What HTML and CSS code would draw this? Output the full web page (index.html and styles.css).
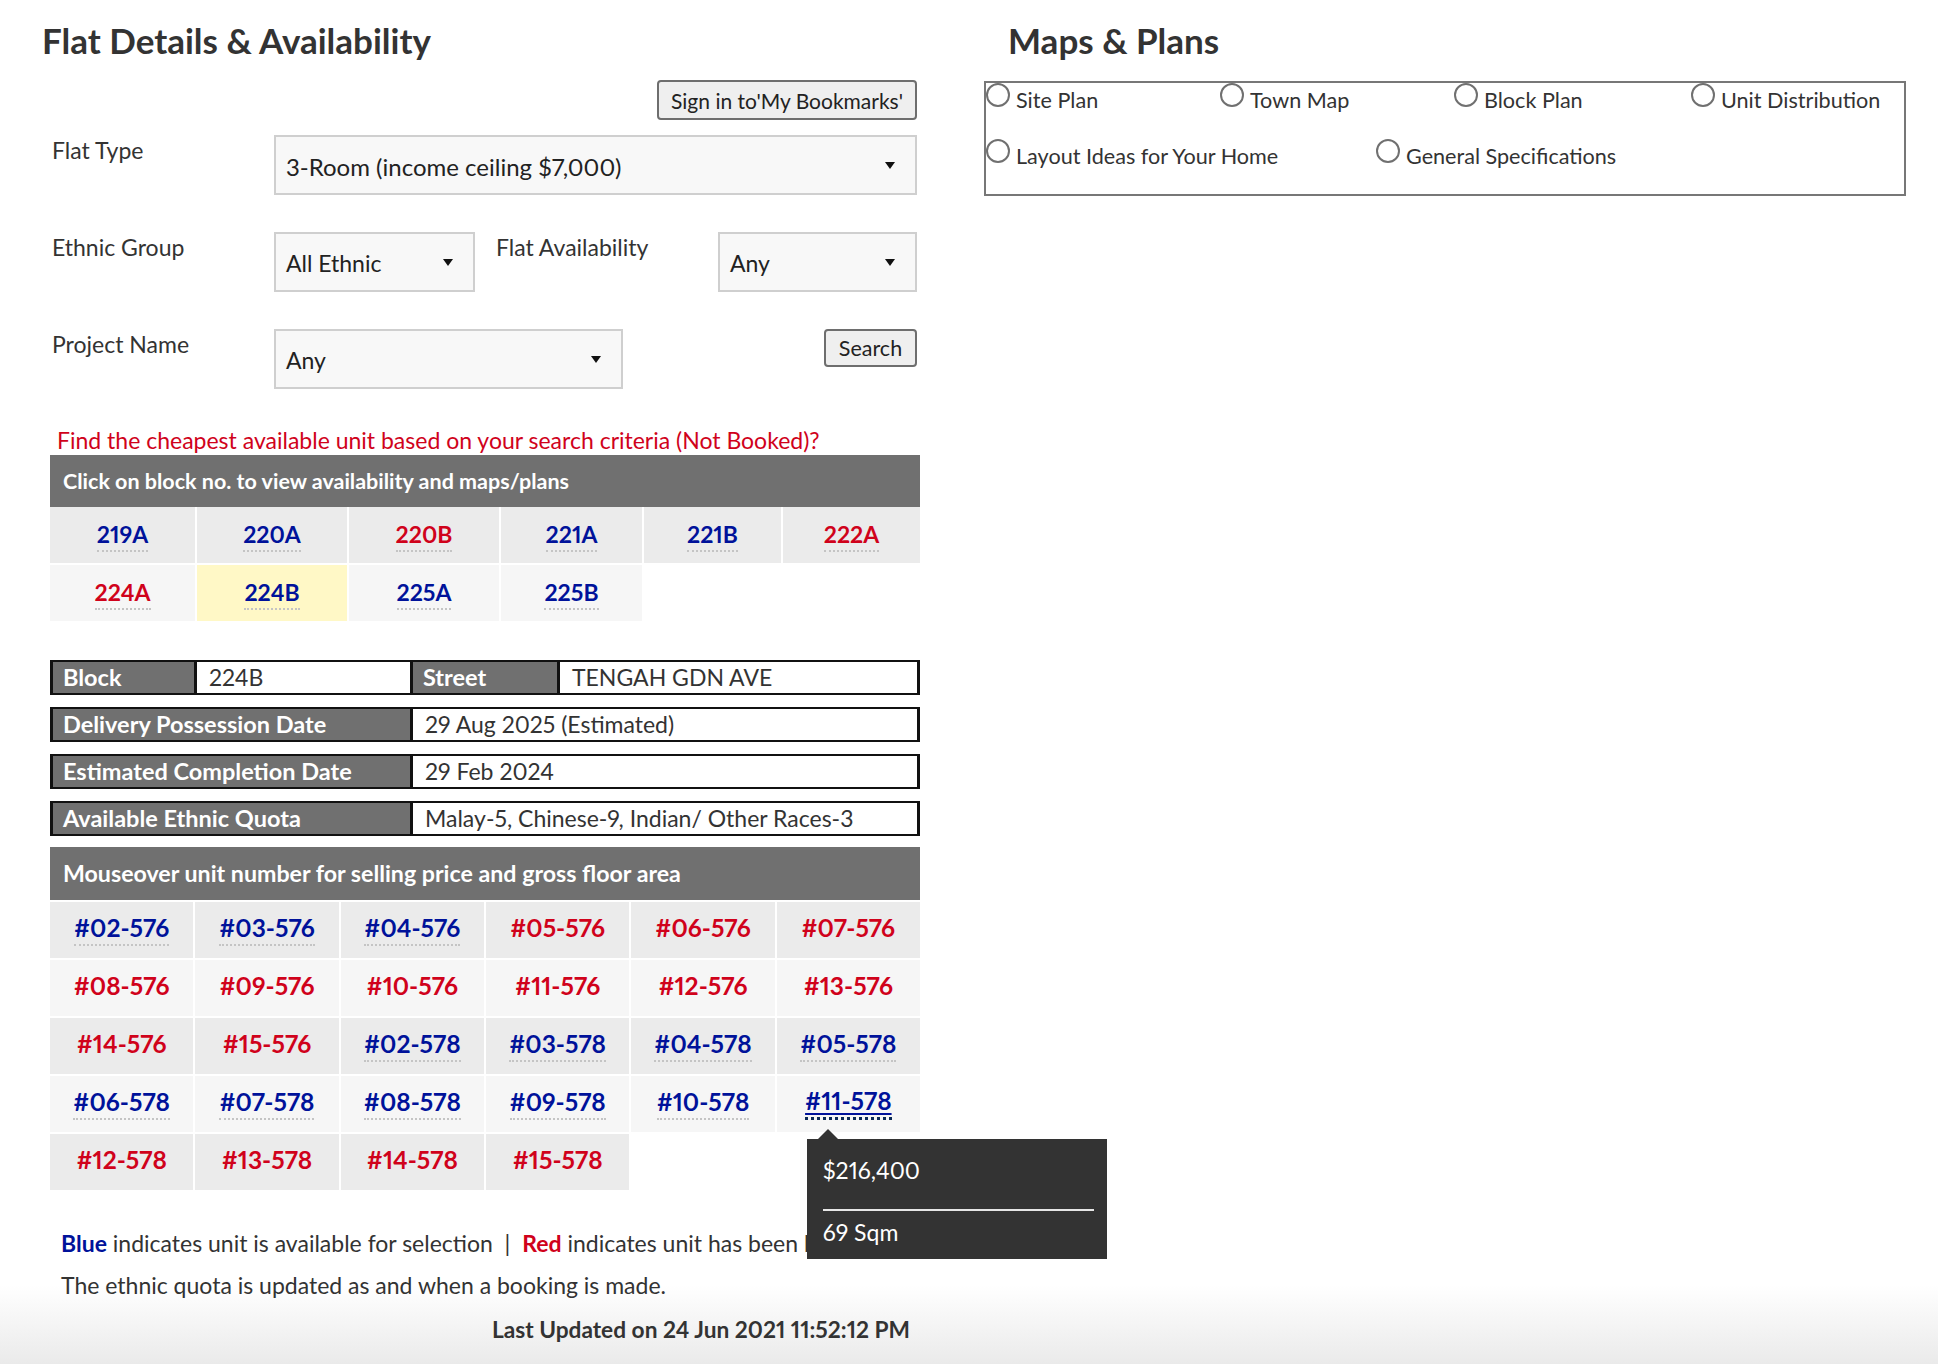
FILE: index.html
```html
<!DOCTYPE html>
<html lang="en">
<head>
<meta charset="utf-8">
<title>Flat Details &amp; Availability</title>
<link rel="stylesheet" href="styles.css">
</head>
<body>
<div class="page">
  <section class="col-left">
    <h2 class="title title-left">Flat Details &amp; Availability</h2>
    <div class="bookmark-row"><button class="btn btn-bookmark">Sign in to'My Bookmarks'</button></div>

    <div class="form">
      <div class="form-row">
        <label class="f-label">Flat Type</label>
        <div class="select sel-flat"><span>3-Room (income ceiling $7,000)</span><i class="caret"></i></div>
      </div>
      <div class="form-row">
        <label class="f-label">Ethnic Group</label>
        <div class="select sel-ethnic"><span>All Ethnic</span><i class="caret"></i></div>
        <label class="f-label f-label-2">Flat Availability</label>
        <div class="select sel-avail"><span>Any</span><i class="caret"></i></div>
      </div>
      <div class="form-row">
        <label class="f-label">Project Name</label>
        <div class="select sel-project"><span>Any</span><i class="caret"></i></div>
        <button class="btn btn-search">Search</button>
      </div>
    </div>

    <p class="cheapest">Find the cheapest available unit based on your search criteria (Not Booked)?</p>
    <div class="bar bar-blocks">Click on block no. to view availability and maps/plans</div>
    <div class="blocks">
      <div class="bcell r-dark"><a class="lnk blue">219A</a></div>
      <div class="bcell r-dark"><a class="lnk blue">220A</a></div>
      <div class="bcell r-dark"><a class="lnk red">220B</a></div>
      <div class="bcell r-dark"><a class="lnk blue">221A</a></div>
      <div class="bcell r-dark"><a class="lnk blue">221B</a></div>
      <div class="bcell r-dark"><a class="lnk red">222A</a></div>
      <div class="bcell r-light"><a class="lnk red">224A</a></div>
      <div class="bcell r-sel"><a class="lnk blue">224B</a></div>
      <div class="bcell r-light"><a class="lnk blue">225A</a></div>
      <div class="bcell r-light"><a class="lnk blue">225B</a></div>
    </div>

    <div class="info">
      <div class="info-row">
        <div class="ic ic-label ic-w1">Block</div>
        <div class="ic ic-val ic-w2">224B</div>
        <div class="ic ic-label ic-w3">Street</div>
        <div class="ic ic-val ic-grow">TENGAH GDN AVE</div>
      </div>
      <div class="info-row">
        <div class="ic ic-label ic-wl">Delivery Possession Date</div>
        <div class="ic ic-val ic-grow">29 Aug 2025 (Estimated)</div>
      </div>
      <div class="info-row">
        <div class="ic ic-label ic-wl">Estimated Completion Date</div>
        <div class="ic ic-val ic-grow">29 Feb 2024</div>
      </div>
      <div class="info-row">
        <div class="ic ic-label ic-wl">Available Ethnic Quota</div>
        <div class="ic ic-val ic-grow">Malay-5, Chinese-9, Indian/ Other Races-3</div>
      </div>
    </div>

    <div class="bar bar-units">Mouseover unit number for selling price and gross floor area</div>
    <div class="units">
      <div class="ucell r-dark"><a class="lnk blue">#02-576</a></div>
      <div class="ucell r-dark"><a class="lnk blue">#03-576</a></div>
      <div class="ucell r-dark"><a class="lnk blue">#04-576</a></div>
      <div class="ucell r-dark"><a class="lnk red nodot">#05-576</a></div>
      <div class="ucell r-dark"><a class="lnk red nodot">#06-576</a></div>
      <div class="ucell r-dark"><a class="lnk red nodot">#07-576</a></div>

      <div class="ucell r-light"><a class="lnk red nodot">#08-576</a></div>
      <div class="ucell r-light"><a class="lnk red nodot">#09-576</a></div>
      <div class="ucell r-light"><a class="lnk red nodot">#10-576</a></div>
      <div class="ucell r-light"><a class="lnk red nodot">#11-576</a></div>
      <div class="ucell r-light"><a class="lnk red nodot">#12-576</a></div>
      <div class="ucell r-light"><a class="lnk red nodot">#13-576</a></div>

      <div class="ucell r-dark"><a class="lnk red nodot">#14-576</a></div>
      <div class="ucell r-dark"><a class="lnk red nodot">#15-576</a></div>
      <div class="ucell r-dark"><a class="lnk blue">#02-578</a></div>
      <div class="ucell r-dark"><a class="lnk blue">#03-578</a></div>
      <div class="ucell r-dark"><a class="lnk blue">#04-578</a></div>
      <div class="ucell r-dark"><a class="lnk blue">#05-578</a></div>

      <div class="ucell r-light"><a class="lnk blue">#06-578</a></div>
      <div class="ucell r-light"><a class="lnk blue">#07-578</a></div>
      <div class="ucell r-light"><a class="lnk blue">#08-578</a></div>
      <div class="ucell r-light"><a class="lnk blue">#09-578</a></div>
      <div class="ucell r-light"><a class="lnk blue">#10-578</a></div>
      <div class="ucell r-light ucell-hover"><a class="lnk blue hovered">#11-578</a>
        <div class="tooltip">
          <div class="tt-line">$216,400</div>
          <hr class="tt-rule">
          <div class="tt-line">69 Sqm</div>
        </div>
      </div>

      <div class="ucell r-dark"><a class="lnk red nodot">#12-578</a></div>
      <div class="ucell r-dark"><a class="lnk red nodot">#13-578</a></div>
      <div class="ucell r-dark"><a class="lnk red nodot">#14-578</a></div>
      <div class="ucell r-dark"><a class="lnk red nodot">#15-578</a></div>
    </div>

    <p class="legend"><b class="blue">Blue</b> indicates unit is available for selection &nbsp;|&nbsp; <b class="red">Red</b> indicates unit has been booked.</p>
    <p class="note">The ethnic quota is updated as and when a booking is made.</p>
    <p class="updated">Last Updated on 24 Jun 2021 11:52:12 PM</p>
  </section>

  <section class="col-right">
    <h2 class="title title-right">Maps &amp; Plans</h2>
    <div class="plans">
      <div class="plan-row">
        <label class="opt opt-w1"><input type="radio" name="plan"><span>Site Plan</span></label>
        <label class="opt opt-w1"><input type="radio" name="plan"><span>Town Map</span></label>
        <label class="opt opt-w2"><input type="radio" name="plan"><span>Block Plan</span></label>
        <label class="opt"><input type="radio" name="plan"><span>Unit Distribution</span></label>
      </div>
      <div class="plan-row">
        <label class="opt opt-w3"><input type="radio" name="plan"><span>Layout Ideas for Your Home</span></label>
        <label class="opt"><input type="radio" name="plan"><span>General Specifications</span></label>
      </div>
    </div>
  </section>
</div>
</body>
</html>
```

FILE: styles.css
```css
html {
  background: #fff;
}
body {
  margin: 0;
  height: 1364px;
  overflow: hidden;
  font-family: Lato, "Open Sans", "Noto Sans", sans-serif;
  font-size: 23px;
  font-variant-numeric: proportional-nums;
  color: #333;
  background: linear-gradient(to bottom, #fff 0, #fff 1285px, #eaeaea 1364px);
}
.page {
  display: flex;
  align-items: flex-start;
  padding-top: 18px;
}
.col-left {
  margin-left: 50px;
  width: 870px;
}
.col-right {
  margin-left: 64px;
  width: 922px;
}
.title {
  margin: 0;
  font-size: 35px;
  line-height: 44px;
  font-weight: 700;
  color: #333;
}
.title-left {
  margin-left: -8px;
}
.title-right {
  padding-left: 24px;
}

/* buttons */
.btn {
  font-family: inherit;
  font-size: 21px;
  font-variant-numeric: proportional-nums;
  color: #222;
  background: #efefef;
  border: 2px solid #6e6e6e;
  border-radius: 4px;
  padding: 0 12px;
  cursor: pointer;
}
.bookmark-row {
  width: 867px;
  display: flex;
  justify-content: flex-end;
  margin-top: 18px;
}
.btn-bookmark {
  height: 40px;
}

/* form */
.form {
  width: 867px;
  margin-top: 15px;
}
.form-row {
  display: flex;
  align-items: flex-start;
  margin-bottom: 37px;
}
.form-row:last-child {
  margin-bottom: 0;
}
.f-label {
  width: 222px;
  padding-left: 2px;
  line-height: 30px;
  color: #333;
}
.f-label-2 {
  padding-left: 21px;
  width: 222px;
}
.select {
  box-sizing: border-box;
  height: 60px;
  background: #f8f8f8;
  border: 2px solid #cfcfcf;
  display: flex;
  align-items: center;
  padding: 0 0 0 10px;
  color: #222;
  position: relative;
}
.select span {
  flex: 1;
  padding-top: 2px;
}
.sel-flat span {
  font-size: 24px;
}
.caret {
  width: 0;
  height: 0;
  border-left: 5px solid transparent;
  border-right: 5px solid transparent;
  border-top: 7px solid #111;
  margin-right: 20px;
}
.sel-flat { width: 643px; }
.sel-ethnic { width: 201px; }
.sel-avail { width: 199px; }
.sel-project { width: 349px; }
.btn-search {
  margin-left: auto;
  height: 38px;
  width: 93px;
  padding: 0;
  font-size: 21.5px;
}

/* red link line */
.cheapest {
  margin: 36px 0 0 7px;
  line-height: 30px;
  color: #d0021b;
}

/* grey bars */
.bar {
  height: 52px;
  line-height: 52px;
  background: #707070;
  color: #fff;
  font-weight: 700;
  padding-left: 13px;
}
.bar-blocks {
  font-size: 21.5px;
}

/* blocks */
.blocks {
  display: grid;
  grid-template-columns: 145px 150px 150px 141px 137px 137px;
  grid-auto-rows: 56px;
  gap: 2px;
}
.bcell, .ucell {
  display: flex;
  align-items: center;
  justify-content: center;
}
.r-dark { background: #ebebeb; }
.r-light { background: #f6f6f6; }
.r-sel { background: #fff8c6; }

.lnk {
  font-weight: 700;
  font-size: 23px;
  line-height: 26px;
  padding-bottom: 3px;
  border-bottom: 2px dotted #c4c4c4;
  text-decoration: none;
  cursor: pointer;
}
.bcell .lnk {
  margin-top: 3px;
}
.ucell .lnk {
  font-size: 24.5px;
}
.blue { color: #00129a; }
.red { color: #d0021b; }
.lnk.nodot {
  border-bottom-color: transparent;
}
.lnk.hovered {
  text-decoration: underline;
  text-decoration-thickness: 2px;
  text-underline-offset: 3px;
  border-bottom: 3px dotted #0b2a57;
}

/* info rows */
.info {
  margin-top: 39px;
}
.info-row {
  display: flex;
  height: 35px;
  box-sizing: border-box;
  border: 2px solid #111;
  border-left-width: 3px;
  border-right-width: 3px;
  margin-bottom: 12px;
}
.info-row:last-child {
  margin-bottom: 11px;
}
.ic {
  box-sizing: border-box;
  line-height: 31px;
  padding-left: 10px;
  white-space: nowrap;
}
.ic + .ic {
  border-left: 3px solid #111;
}
.ic-label {
  background: #707070;
  color: #fff;
  font-weight: 700;
  font-size: 23.5px;
}
.ic-val {
  background: #fff;
  color: #333;
  padding-left: 12px;
}
.ic-w1 { width: 141px; }
.ic-w2 { width: 216px; }
.ic-w3 { width: 147px; }
.ic-wl { width: 357px; }
.ic-grow { flex: 1; }

/* units */
.bar-units {
  height: 53px;
  line-height: 53px;
  font-size: 23.2px;
}
.units {
  margin-top: 2px;
  display: grid;
  grid-template-columns: repeat(6, 1fr);
  grid-auto-rows: 56px;
  gap: 2px;
}
.ucell-hover {
  position: relative;
}
.tooltip {
  position: absolute;
  left: 30px;
  top: 63px;
  width: 300px;
  box-sizing: border-box;
  background: #333;
  color: #fff;
  padding: 16px 13px 12px 16px;
  z-index: 5;
}
.tooltip::before {
  content: "";
  position: absolute;
  top: -10px;
  left: 11px;
  border-left: 10px solid transparent;
  border-right: 10px solid transparent;
  border-bottom: 10px solid #333;
}
.tt-line {
  line-height: 30px;
  font-size: 23px;
}
.tt-rule {
  border: 0;
  height: 2px;
  background: #e6e6e6;
  margin: 24px 0 6px 0;
}

/* legend */
.legend {
  margin: 38px 0 0 11px;
  line-height: 30px;
}
.note {
  margin: 12px 0 0 11px;
  line-height: 30px;
}
.updated {
  margin: 15px 10px 0 0;
  line-height: 30px;
  font-weight: 700;
  font-size: 22.7px;
  text-align: right;
}

/* maps & plans */
.plans {
  margin-top: 19px;
  border: 2px solid #777;
  padding: 0 0 24px 0;
}
.plan-row {
  display: flex;
  margin-bottom: 25px;
}
.plan-row:last-child {
  margin-bottom: 0;
}
.opt {
  display: flex;
  align-items: flex-start;
  font-size: 21.6px;
  color: #333;
  cursor: pointer;
}
.opt input {
  appearance: none;
  -webkit-appearance: none;
  width: 24px;
  height: 24px;
  margin: 0 6px 0 0;
  border: 2px solid #707070;
  border-radius: 50%;
  background: #fff;
}
.opt span {
  line-height: 28px;
  margin-top: 3px;
}
.opt-w1 { width: 234px; }
.opt-w2 { width: 237px; }
.opt-w3 { width: 390px; }
```
